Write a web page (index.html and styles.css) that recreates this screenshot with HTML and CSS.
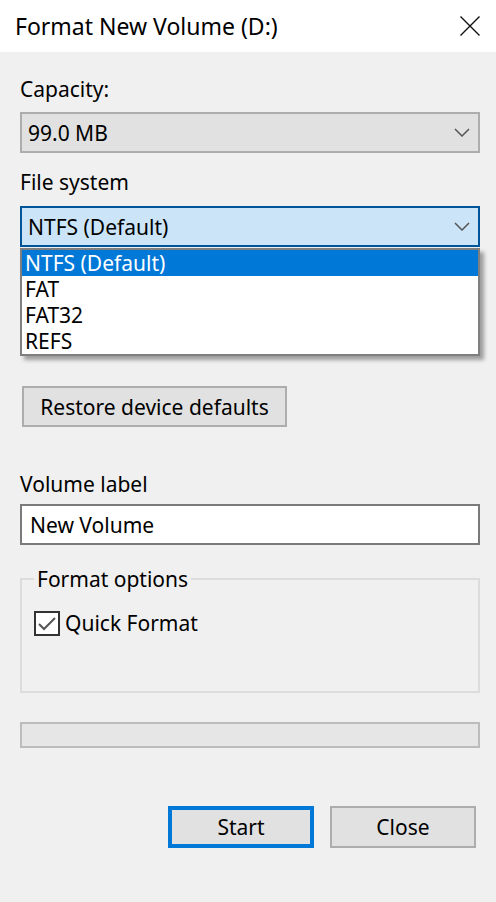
FILE: index.html
```html
<!DOCTYPE html>
<html lang="en">
<head>
    <meta charset="UTF-8">
    <meta name="viewport" content="width=device-width, initial-scale=1.0">
    <title>Format New Volume (D:)</title>
    <link rel="stylesheet" href="styles.css">
</head>
<body>
    <div class="titlebar">
        <span class="title">Format New Volume (D:)</span>
        <svg class="close-icon" width="20" height="20" viewBox="0 0 20 20">
            <path d="M0.5 0.5L19.5 19.5M19.5 0.5L0.5 19.5"/>
        </svg>
    </div>

    <main class="content">
        <label class="field-label capacity-label">Capacity:</label>
        <div class="combo">
            <span>99.0 MB</span>
            <svg class="chevron" width="16" height="9" viewBox="0 0 16 9"><path d="M1 1L8 8L15 1"/></svg>
        </div>

        <label class="field-label fs-label">File system</label>
        <div class="combo-wrap">
            <div class="combo focused">
                <span>NTFS (Default)</span>
                <svg class="chevron" width="16" height="9" viewBox="0 0 16 9"><path d="M1 1L8 8L15 1"/></svg>
            </div>
            <ul class="dropdown">
                <li class="selected">NTFS (Default)</li>
                <li>FAT</li>
                <li>FAT32</li>
                <li>REFS</li>
            </ul>
        </div>

        <button class="btn restore">Restore device defaults</button>

        <label class="field-label volume-label">Volume label</label>
        <div class="textbox">New Volume</div>

        <fieldset class="options">
            <legend>Format options</legend>
            <label class="check-row">
                <span class="checkbox">
                    <svg width="22" height="21" viewBox="0 0 22 21"><path d="M3 11L8 16L19 5"/></svg>
                </span>
                Quick Format
            </label>
        </fieldset>

        <div class="progress"></div>

        <div class="actions">
            <button class="btn start">Start</button>
            <button class="btn close">Close</button>
        </div>
    </main>
</body>
</html>
```

FILE: styles.css
```css
/* dialog base */
body {
    margin: 0;
    background: #f0f0f0;
    font-family: "Noto Sans", "Open Sans", sans-serif;
    font-size: 21px;
    line-height: 28px;
    color: #000;
}

.titlebar {
    height: 52px;
    background: #fff;
    display: flex;
    align-items: center;
    justify-content: space-between;
    padding: 0 16px 0 15px;
}

.title {
    font-size: 23px;
}

.close-icon path {
    stroke: #111;
    stroke-width: 1.4;
    fill: none;
}

.content {
    padding: 0 16px 0 20px;
}

.field-label {
    display: block;
}

.capacity-label {
    margin: 23px 0 9px;
}

.fs-label {
    margin: 15px 0 10px;
}

.volume-label {
    margin: 43px 0 6px;
}

/* combo boxes */
.combo {
    height: 41px;
    box-sizing: border-box;
    border: 2px solid #adadad;
    background: #e1e1e1;
    display: flex;
    align-items: center;
    justify-content: space-between;
    padding: 0 8px 0 6px;
}

.combo.focused {
    background: #cce4f7;
    border-color: #005499;
}

.chevron path {
    stroke: #555;
    stroke-width: 1.5;
    fill: none;
}

.combo-wrap {
    position: relative;
}

.dropdown {
    position: absolute;
    top: 42px;
    left: 0;
    right: 0;
    margin: 0;
    padding: 0;
    list-style: none;
    background: #fff;
    border: 2px solid #7f7f7f;
    box-shadow: 4px 4px 4px rgba(0, 0, 0, 0.35);
    z-index: 5;
}

.dropdown li {
    height: 26px;
    line-height: 26px;
    padding-left: 3px;
}

.dropdown li.selected {
    background: #0078d7;
    color: #fff;
}

/* buttons */
.btn {
    font: inherit;
    color: #000;
    background: #e1e1e1;
    border: 2px solid #adadad;
    padding: 0;
    box-sizing: border-box;
}

.restore {
    display: block;
    margin: 139px 0 0 2px;
    width: 265px;
    height: 41px;
}

.textbox {
    height: 41px;
    box-sizing: border-box;
    border: 2px solid #7a7a7a;
    background: #fff;
    padding-left: 8px;
    display: flex;
    align-items: center;
}

/* format options group */
.options {
    margin: 20px 0 0;
    border: 2px solid #dcdcdc;
    padding: 16px 12px 54px;
    min-width: 0;
}

.options legend {
    padding: 0 3px;
}

.check-row {
    display: flex;
    align-items: center;
    gap: 5px;
    height: 28px;
}

.checkbox {
    width: 26px;
    height: 25px;
    box-sizing: border-box;
    border: 2px solid #333;
    background: #fff;
    display: flex;
    align-items: center;
    justify-content: center;
}

.checkbox path {
    stroke: #555;
    stroke-width: 2;
    fill: none;
}

.progress {
    margin-top: 29px;
    height: 26px;
    box-sizing: border-box;
    border: 2px solid #bcbcbc;
    background: #e6e6e6;
}

.actions {
    margin-top: 58px;
    display: flex;
    justify-content: flex-end;
    gap: 16px;
    padding-right: 4px;
}

.actions .btn {
    width: 146px;
    height: 42px;
}

.start {
    border: 4px solid #0078d7;
}
```
